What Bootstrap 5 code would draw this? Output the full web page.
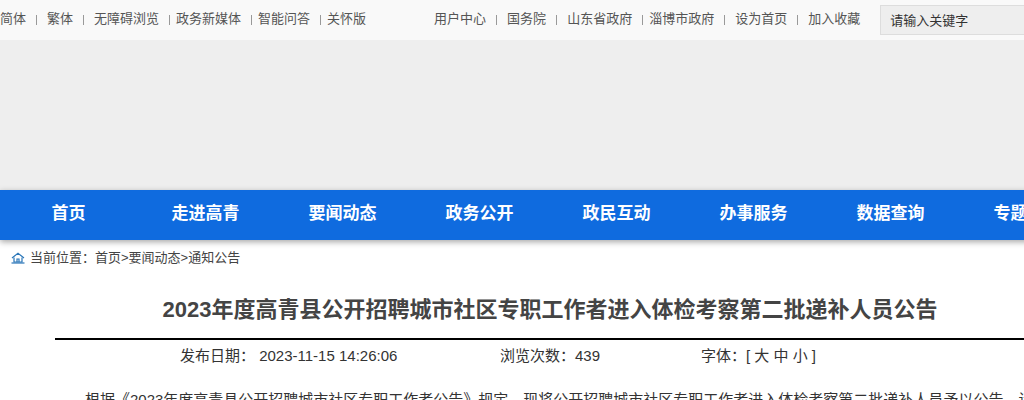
<!DOCTYPE html>
<html lang="zh-CN">
<head>
    <meta charset="UTF-8">
    <meta name="viewport" content="width=device-width, initial-scale=1.0">
    <title>2023年度高青县公开招聘城市社区专职工作者进入体检考察第二批递补人员公告</title>
    <link rel="stylesheet" href="https://cdn.jsdelivr.net/npm/bootstrap@5.3.3/dist/css/bootstrap.min.css">
    <script src="https://cdn.jsdelivr.net/npm/bootstrap@5.3.3/dist/js/bootstrap.bundle.min.js"></script>
    <style>
        html, body { overflow: hidden; }
        body { width: 1024px; height: 400px; font-family: "Liberation Sans", "Noto Sans CJK SC", sans-serif; color: #333; background: #fff; }
        .page-wrap { width: 1300px; }
        .top-bar { height: 40px; background: #f9f9f9; font-size: 13px; color: #555; }
        .top-bar a { color: #555; text-decoration: none; white-space: nowrap; }
        .link-group { height: 37px; }
        .sep { width: 1px; height: 10px; background: #999; margin: 2px 10px 0; flex: none; }
        .sep-tight { margin-right: 6px; }
        .top-right { margin-left: 68px; }
        .search-box { margin-left: 20px; margin-top: 5px; width: 260px; height: 30px; background: #eee; border: 1px solid #ddd; font-size: 13px; color: #333; padding: 0 9px; line-height: 29px; }
        .banner-area { height: 150px; background: #eee; }
        .main-nav { height: 50px; background: #0f6bdf; box-shadow: 0 2px 6px rgba(0, 0, 0, .35); position: relative; }
        .main-nav a { width: 137px; flex: none; text-align: center; line-height: 47px; color: #fff; font-size: 17px; font-weight: 700; text-decoration: none; }
        .crumb-row { height: 36px; padding-left: 11px; font-size: 13px; color: #444; }
        .crumb-row svg { margin-right: 1px; }
        .article { width: 990px; margin-left: 55px; }
        .article-title { font-size: 22px; font-weight: 700; color: #444; text-align: center; margin: 0; height: 64px; line-height: 68px; border-bottom: 2px solid #000; }
        .article-meta { height: 33px; font-size: 15px; color: #333; line-height: 32px; padding-left: 125px; }
        .meta-date { width: 320px; }
        .meta-views { width: 201px; }
        .article-body { margin-top: 13px; font-size: 15px; line-height: 28px; text-indent: 2em; color: #333; white-space: nowrap; }
    </style>
</head>
<body>
<div class="page-wrap">
    <div class="top-bar d-flex align-items-start">
        <div class="link-group d-flex align-items-center">
            <a href="#">简体</a><span class="sep"></span>
            <a href="#">繁体</a><span class="sep"></span>
            <a href="#">无障碍浏览</a><span class="sep sep-tight"></span>
            <a href="#">政务新媒体</a><span class="sep sep-tight"></span>
            <a href="#">智能问答</a><span class="sep sep-tight"></span>
            <a href="#">关怀版</a>
        </div>
        <div class="link-group top-right d-flex align-items-center">
            <a href="#">用户中心</a><span class="sep"></span>
            <a href="#">国务院</a><span class="sep"></span>
            <a href="#">山东省政府</a><span class="sep sep-tight"></span>
            <a href="#">淄博市政府</a><span class="sep"></span>
            <a href="#">设为首页</a><span class="sep"></span>
            <a href="#">加入收藏</a>
        </div>
        <div class="search-box">请输入关键字</div>
    </div>
    <div class="banner-area"></div>
    <nav class="main-nav d-flex">
        <a href="#">首页</a>
        <a href="#">走进高青</a>
        <a href="#">要闻动态</a>
        <a href="#">政务公开</a>
        <a href="#">政民互动</a>
        <a href="#">办事服务</a>
        <a href="#">数据查询</a>
        <a href="#">专题专栏</a>
    </nav>
    <div class="crumb-row d-flex align-items-center gap-1">
        <svg width="14" height="12" viewBox="0 0 14 12" fill="none" stroke="#2a76b8" stroke-width="1.2">
            <path d="M1 6 7 1.2 13 6"/>
            <path d="M3 5.5V10h8V5.5"/>
            <path d="M6 10V7h2v3"/>
            <path d="M0.5 11h13"/>
        </svg>
        <span>当前位置：首页&gt;要闻动态&gt;通知公告</span>
    </div>
    <div class="article">
        <h1 class="article-title">2023年度高青县公开招聘城市社区专职工作者进入体检考察第二批递补人员公告</h1>
        <div class="article-meta d-flex">
            <span class="meta-date">发布日期：&nbsp;2023-11-15 14:26:06</span>
            <span class="meta-views">浏览次数：439</span>
            <span>字体：[ 大 中 小 ]</span>
        </div>
        <p class="article-body">根据《2023年度高青县公开招聘城市社区专职工作者公告》规定，现将公开招聘城市社区专职工作者进入体检考察第二批递补人员予以公告，请</p>
    </div>
</div>
</body>
</html>
